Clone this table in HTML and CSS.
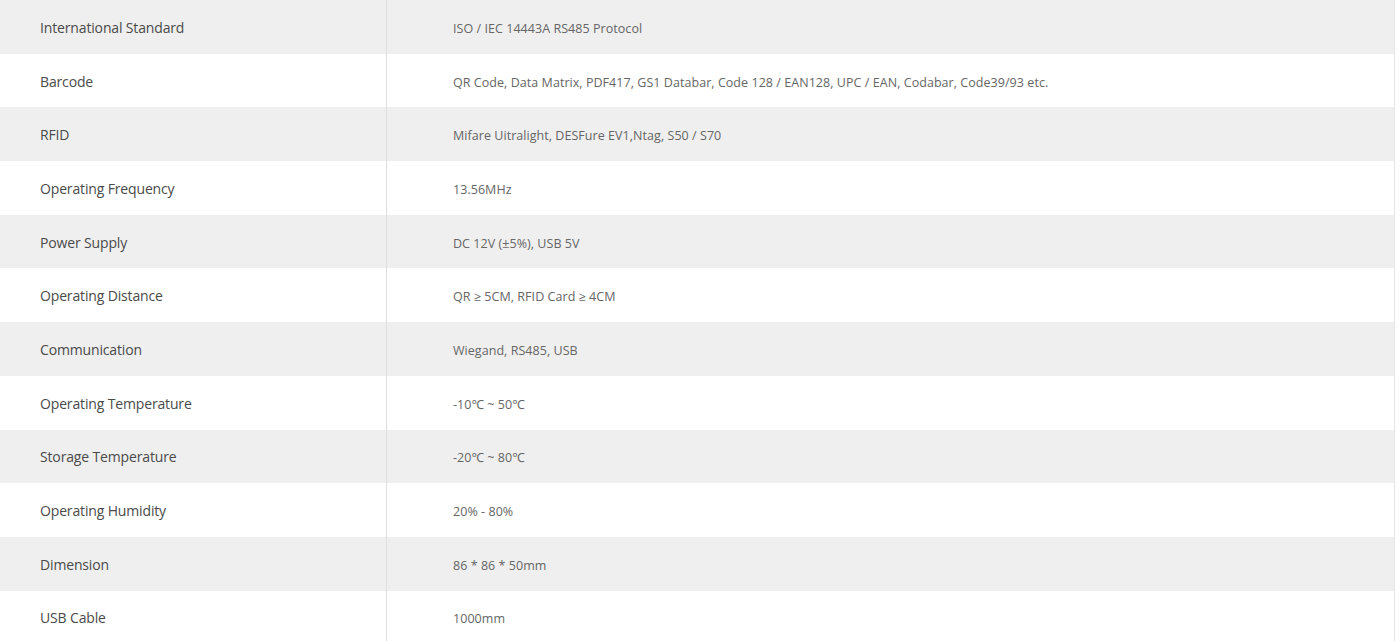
FILE: index.html
```html
<!DOCTYPE html>
<html>
<head>
<meta charset="utf-8">
<link rel="stylesheet" href="styles.css">
</head>
<body>
<div class="spec">
  <div class="row"><div class="label">International Standard</div><div class="value">ISO / IEC 14443A RS485 Protocol</div></div>
  <div class="row"><div class="label">Barcode</div><div class="value">QR Code, Data Matrix, PDF417, GS1 Databar, Code 128 / EAN128, UPC / EAN, Codabar, Code39/93 etc.</div></div>
  <div class="row"><div class="label">RFID</div><div class="value">Mifare Uitralight, DESFure EV1,Ntag, S50 / S70</div></div>
  <div class="row"><div class="label">Operating Frequency</div><div class="value">13.56MHz</div></div>
  <div class="row"><div class="label">Power Supply</div><div class="value">DC 12V (±5%), USB 5V</div></div>
  <div class="row"><div class="label">Operating Distance</div><div class="value">QR ≥ 5CM, RFID Card ≥ 4CM</div></div>
  <div class="row"><div class="label">Communication</div><div class="value">Wiegand, RS485, USB</div></div>
  <div class="row"><div class="label">Operating Temperature</div><div class="value">-10℃ ~ 50℃</div></div>
  <div class="row"><div class="label">Storage Temperature</div><div class="value">-20℃ ~ 80℃</div></div>
  <div class="row"><div class="label">Operating Humidity</div><div class="value">20% - 80%</div></div>
  <div class="row"><div class="label">Dimension</div><div class="value">86 * 86 * 50mm</div></div>
  <div class="row"><div class="label">USB Cable</div><div class="value">1000mm</div></div>
</div>
</body>
</html>
```

FILE: styles.css
```css
html, body {
  margin: 0;
  padding: 0;
  background: #ffffff;
}
body {
  font-family: "Open Sans", "Noto Sans", sans-serif;
  color: #555555;
}
.spec {
  width: 1394px;
  display: flex;
  flex-direction: column;
  border-right: 1px solid #e6e6e6;
}
.row {
  display: grid;
  grid-template-columns: 387px 1fr;
  height: 53.7px;
  align-items: stretch;
}
.row:nth-child(odd) {
  background: #efefef;
}
.label {
  display: flex;
  align-items: center;
  padding-left: 40px;
  padding-top: 1px;
  font-size: 14px;
  letter-spacing: -0.15px;
  color: #4a4a4a;
  border-right: 1px solid #dedede;
}
.value {
  display: flex;
  align-items: center;
  padding-left: 66px;
  padding-top: 3px;
  font-size: 12.5px;
  letter-spacing: 0.05px;
  color: #666666;
}
```
